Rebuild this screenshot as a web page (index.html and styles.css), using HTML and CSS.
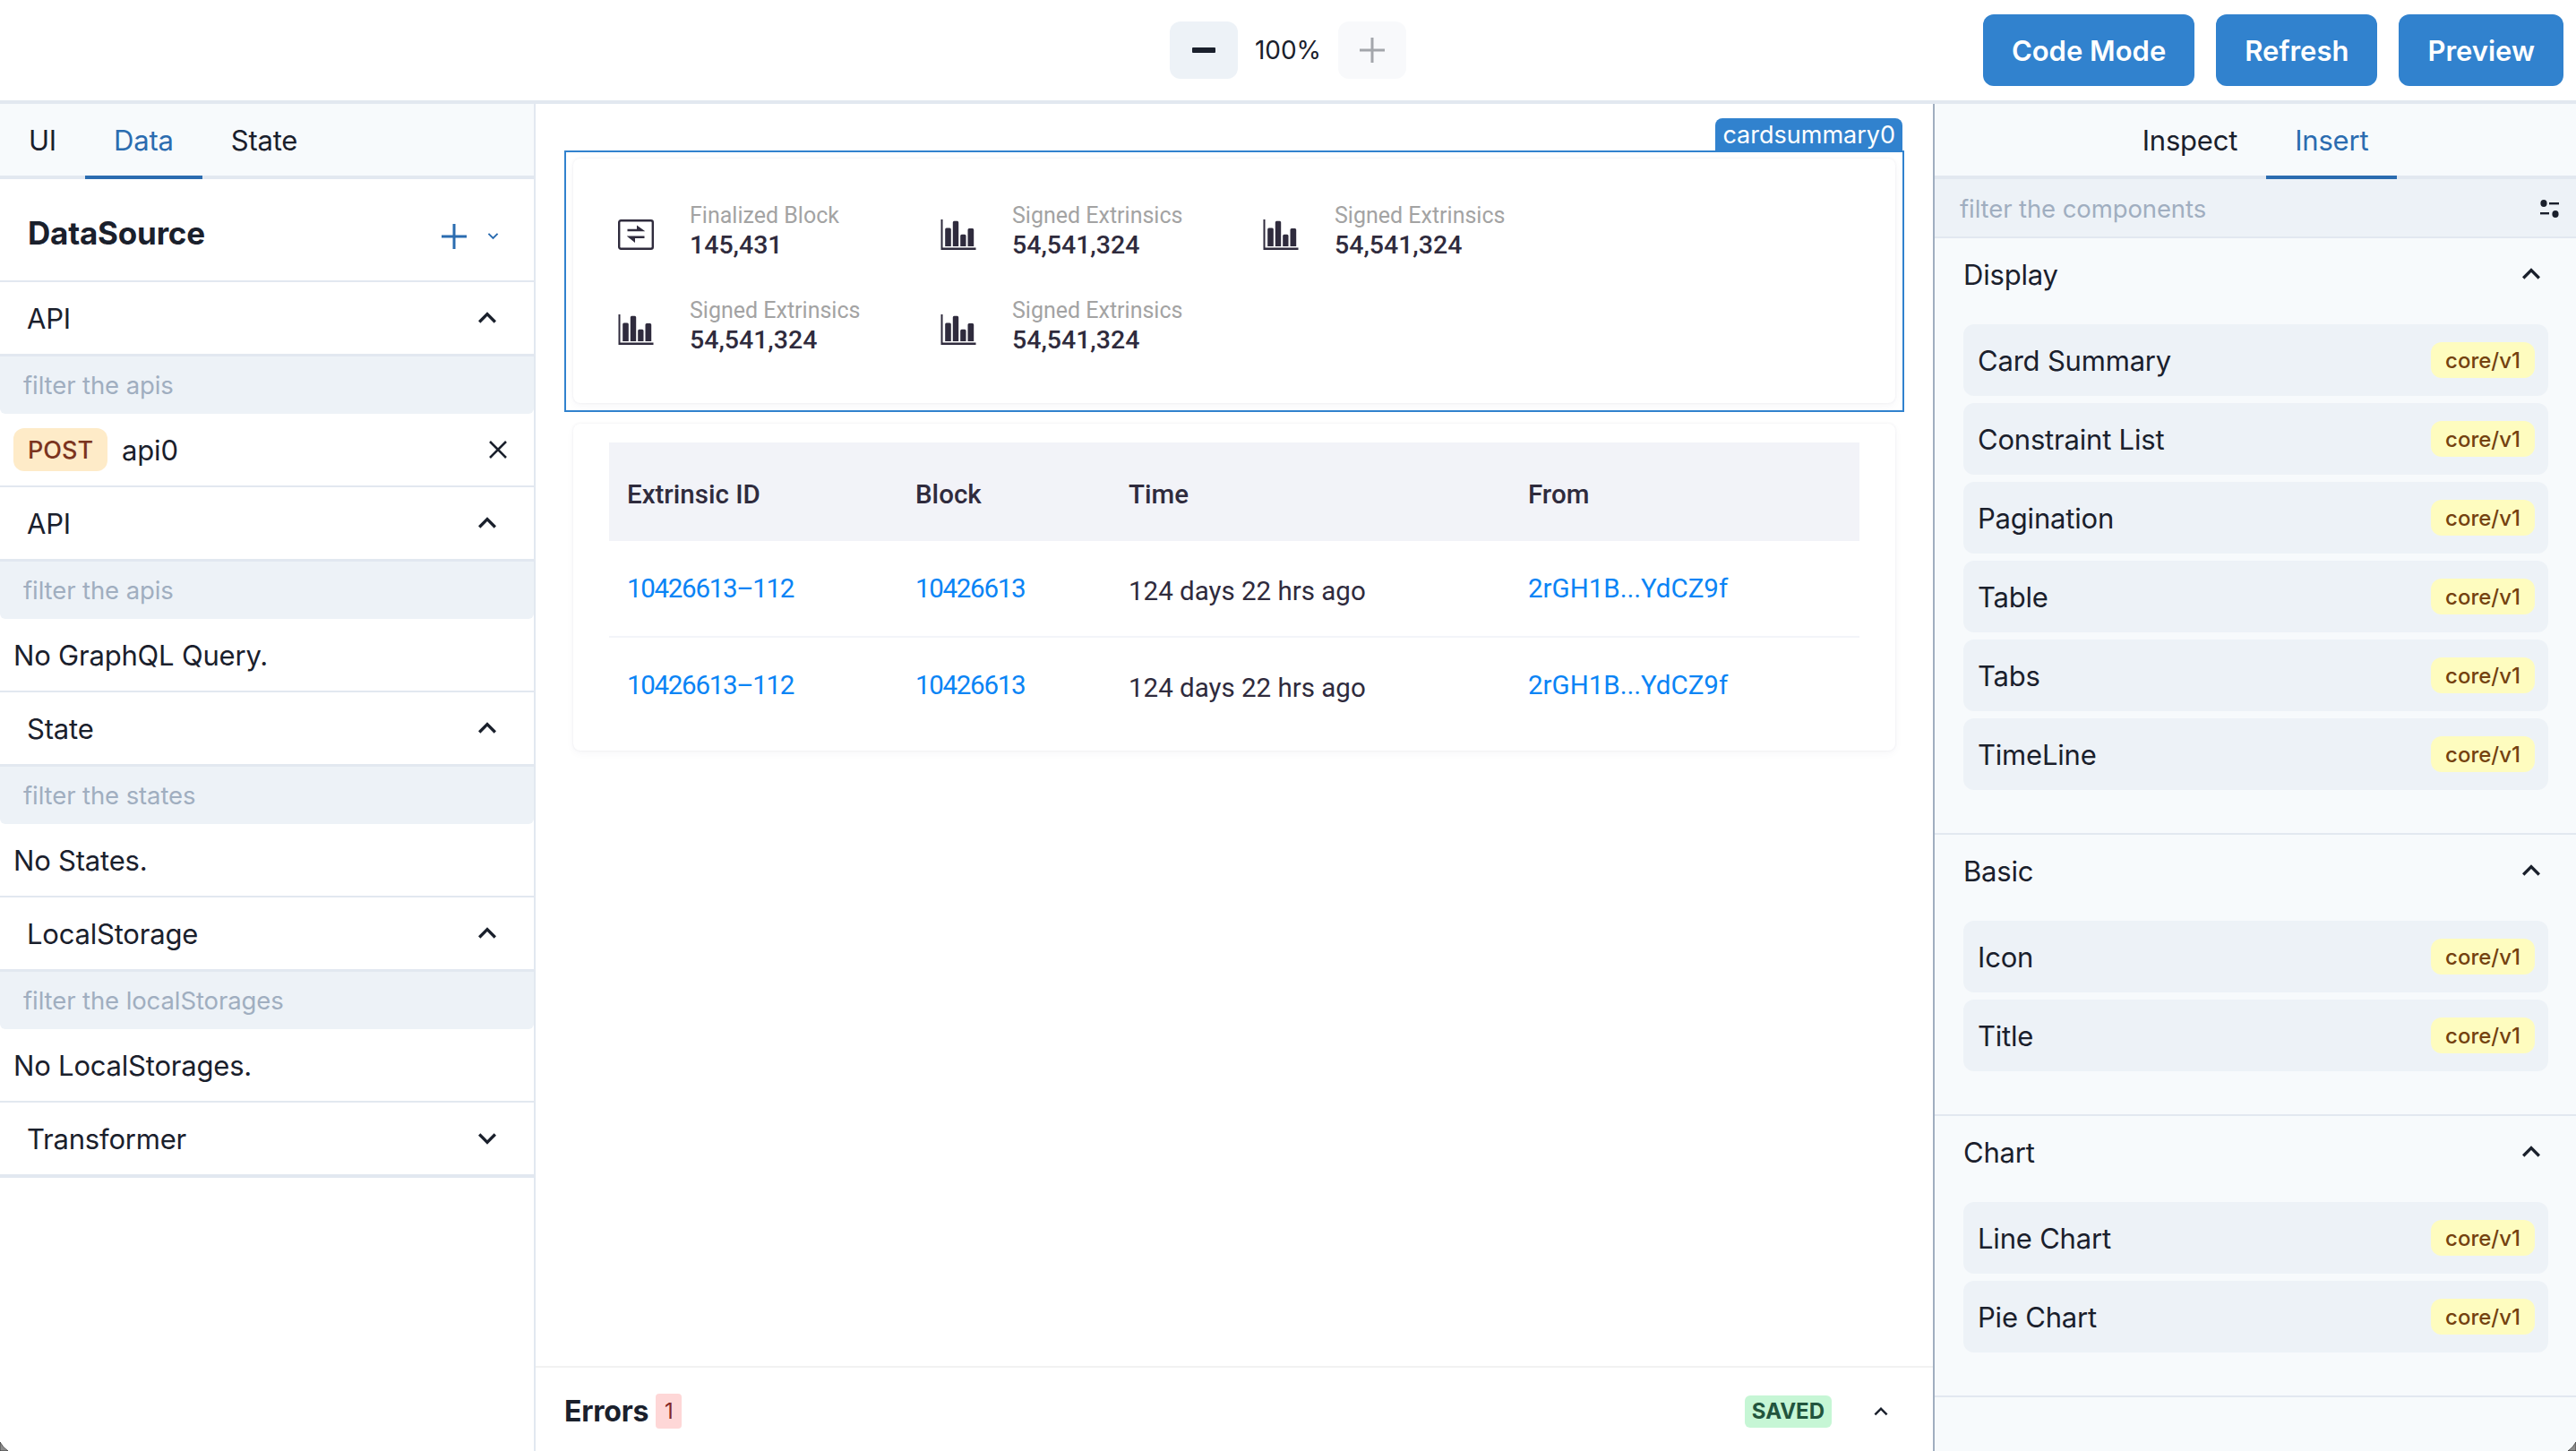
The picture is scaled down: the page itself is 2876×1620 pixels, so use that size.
FILE: index.html
```html
<!DOCTYPE html>
<html lang="en">
  <head>
    <meta charset="UTF-8" />
    <title>Editor</title>
    <link rel="stylesheet" href="styles.css">
  </head>
  <body>
    <svg class="icon-defs" xmlns="http://www.w3.org/2000/svg">
      <symbol id="chevron-up" viewBox="0 0 24 24">
        <path d="M7.41 15.41L12 10.83l4.59 4.58L18 14l-6-6-6 6z" fill="currentColor" />
      </symbol>
      <symbol id="chevron-down" viewBox="0 0 24 24">
        <path d="M7.41 8.59L12 13.17l4.59-4.58L18 10l-6 6-6-6z" fill="currentColor" />
      </symbol>
      <symbol id="chart" viewBox="0 0 39 34">
        <path d="M0 0h2v31.5h37V34H0z" fill="currentColor" />
        <path d="M4.7 30V11q0-1.5 1.5-1.5h3.6q1.5 0 1.5 1.5v19zM13.3 30V3.2q0-1.5 1.5-1.5h3.4q1.5 0 1.5 1.5V30zM21.7 30V18.2q0-1.5 1.5-1.5h3.3q1.5 0 1.5 1.5V30zM30 30V11.5q0-1.5 1.5-1.5h3.7q1.5 0 1.5 1.5V30z" fill="currentColor" />
      </symbol>
      <symbol id="swap" viewBox="0 0 40 34">
        <rect x="1.2" y="1.2" width="37.6" height="31.6" rx="2" fill="none" stroke="currentColor" stroke-width="2.4" />
        <path d="M10.5 10.8H21V6.5l9 6.5v.2H10.5zM29.5 18.5v2.6H19V26l-9-7.3v-.2z" fill="currentColor" />
      </symbol>
    </svg>

    <div class="app">
      <header class="topbar">
        <div></div>
        <div class="zoom-group">
          <button class="zoom-btn">
            <svg width="26" height="6" viewBox="0 0 26 6"><rect width="26" height="6" rx="1" fill="currentColor" /></svg>
          </button>
          <span class="zoom-value">100%</span>
          <button class="zoom-btn zoom-btn-off">
            <svg width="28" height="28" viewBox="0 0 28 28"><path d="M14 0v28M0 14h28" stroke="currentColor" stroke-width="3" /></svg>
          </button>
        </div>
        <div class="top-actions">
          <button class="primary-btn">Code Mode</button>
          <button class="primary-btn">Refresh</button>
          <button class="primary-btn">Preview</button>
        </div>
      </header>

      <div class="workspace">
        <aside class="left-panel">
          <nav class="tabs">
            <a class="tab">UI</a>
            <a class="tab tab-active">Data</a>
            <a class="tab">State</a>
          </nav>

          <div class="ds-head">
            <h2>DataSource</h2>
            <svg class="ds-plus" width="28" height="28" viewBox="0 0 28 28"><path d="M14 0v28M0 14h28" stroke="currentColor" stroke-width="3" /></svg>
            <svg class="ds-caret" width="23" height="23"><use href="#chevron-down" /></svg>
          </div>

          <section class="ds-section">
            <div class="ds-title">API <svg class="chev"><use href="#chevron-up" /></svg></div>
            <div class="ds-filter">filter the apis</div>
            <div class="ds-body">
              <span class="method">POST</span>
              <span class="api-name">api0</span>
              <svg class="close" width="20" height="20" viewBox="0 0 20 20"><path d="M1 1l18 18M19 1L1 19" stroke="currentColor" stroke-width="2.6" /></svg>
            </div>
          </section>

          <section class="ds-section">
            <div class="ds-title">API <svg class="chev"><use href="#chevron-up" /></svg></div>
            <div class="ds-filter">filter the apis</div>
            <div class="ds-body">No GraphQL Query.</div>
          </section>

          <section class="ds-section">
            <div class="ds-title">State <svg class="chev"><use href="#chevron-up" /></svg></div>
            <div class="ds-filter">filter the states</div>
            <div class="ds-body">No States.</div>
          </section>

          <section class="ds-section">
            <div class="ds-title">LocalStorage <svg class="chev"><use href="#chevron-up" /></svg></div>
            <div class="ds-filter">filter the localStorages</div>
            <div class="ds-body">No LocalStorages.</div>
          </section>

          <div class="ds-title ds-title-closed">Transformer <svg class="chev"><use href="#chevron-down" /></svg></div>
        </aside>

        <main class="center">
          <div class="canvas">
            <div class="selected">
              <span class="selected-label">cardsummary0</span>
              <div class="card summary">
                <div class="stat">
                  <svg class="stat-icon"><use href="#swap" /></svg>
                  <div>
                    <div class="stat-label">Finalized Block</div>
                    <div class="stat-value">145,431</div>
                  </div>
                </div>
                <div class="stat">
                  <svg class="stat-icon"><use href="#chart" /></svg>
                  <div>
                    <div class="stat-label">Signed Extrinsics</div>
                    <div class="stat-value">54,541,324</div>
                  </div>
                </div>
                <div class="stat">
                  <svg class="stat-icon"><use href="#chart" /></svg>
                  <div>
                    <div class="stat-label">Signed Extrinsics</div>
                    <div class="stat-value">54,541,324</div>
                  </div>
                </div>
                <div class="stat">
                  <svg class="stat-icon"><use href="#chart" /></svg>
                  <div>
                    <div class="stat-label">Signed Extrinsics</div>
                    <div class="stat-value">54,541,324</div>
                  </div>
                </div>
                <div class="stat">
                  <svg class="stat-icon"><use href="#chart" /></svg>
                  <div>
                    <div class="stat-label">Signed Extrinsics</div>
                    <div class="stat-value">54,541,324</div>
                  </div>
                </div>
              </div>
            </div>

            <div class="card table-card">
              <div class="t-row t-head">
                <div>Extrinsic ID</div>
                <div>Block</div>
                <div>Time</div>
                <div>From</div>
              </div>
              <div class="t-row">
                <a class="t-num">10426613&#8211;112</a>
                <a class="t-num">10426613</a>
                <div class="t-time">124 days 22 hrs ago</div>
                <a>2rGH1B...YdCZ9f</a>
              </div>
              <div class="t-row">
                <a class="t-num">10426613&#8211;112</a>
                <a class="t-num">10426613</a>
                <div class="t-time">124 days 22 hrs ago</div>
                <a>2rGH1B...YdCZ9f</a>
              </div>
            </div>
          </div>

          <footer class="errors-bar">
            <strong>Errors</strong>
            <span class="error-count">1</span>
            <span class="saved">SAVED</span>
            <svg class="errors-chev" width="30" height="30"><use href="#chevron-up" /></svg>
          </footer>
        </main>

        <aside class="right-panel">
          <nav class="tabs tabs-center">
            <a class="tab">Inspect</a>
            <a class="tab tab-active">Insert</a>
          </nav>
          <div class="comp-filter">
            filter the components
            <svg width="21" height="20" viewBox="0 0 21 20">
              <ellipse cx="4" cy="4" rx="3.6" ry="4" fill="#1a202c" />
              <rect x="10" y="3" width="11" height="2.4" fill="#1a202c" />
              <rect y="14" width="10" height="2.4" fill="#1a202c" />
              <ellipse cx="17" cy="16" rx="3.6" ry="4" fill="#1a202c" />
            </svg>
          </div>

          <section class="comp-section">
            <div class="comp-title">Display <svg class="chev"><use href="#chevron-up" /></svg></div>
            <div class="comp-item">Card Summary <span class="version">core/v1</span></div>
            <div class="comp-item">Constraint List <span class="version">core/v1</span></div>
            <div class="comp-item">Pagination <span class="version">core/v1</span></div>
            <div class="comp-item">Table <span class="version">core/v1</span></div>
            <div class="comp-item">Tabs <span class="version">core/v1</span></div>
            <div class="comp-item">TimeLine <span class="version">core/v1</span></div>
          </section>

          <section class="comp-section">
            <div class="comp-title">Basic <svg class="chev"><use href="#chevron-up" /></svg></div>
            <div class="comp-item">Icon <span class="version">core/v1</span></div>
            <div class="comp-item">Title <span class="version">core/v1</span></div>
          </section>

          <section class="comp-section">
            <div class="comp-title">Chart <svg class="chev"><use href="#chevron-up" /></svg></div>
            <div class="comp-item">Line Chart <span class="version">core/v1</span></div>
            <div class="comp-item">Pie Chart <span class="version">core/v1</span></div>
          </section>
        </aside>
      </div>

      <!-- window corners showing at the bottom of the capture -->
      <svg class="corner corner-left" width="10" height="10" viewBox="0 0 10 10"><path d="M0 0Q3 6 9 10H0z" fill="#8c8c8c" stroke="#333" stroke-width=".8" /></svg>
      <svg class="corner corner-right" width="10" height="10" viewBox="0 0 10 10"><path d="M10 0Q7 6 1 10H10z" fill="#8c8c8c" stroke="#333" stroke-width=".8" /></svg>
    </div>
  </body>
</html>
```

FILE: styles.css
```css
/* Global Styles */
* {
  box-sizing: border-box;
}

body {
  margin: 0;
  font-family: "Inter", sans-serif;
  font-size: 31px;
  letter-spacing: -0.2px;
  color: #1a202c;
  background: #fff;
}

.icon-defs {
  display: none;
}

.app {
  position: relative;
  display: flex;
  flex-direction: column;
  height: 100vh;
  overflow: hidden;
}

/* Top bar */
.topbar {
  display: grid;
  grid-template-columns: 1fr auto 1fr;
  align-items: center;
  height: 116px;
  flex-shrink: 0;
  border-bottom: 4px solid #e2e8f0;
}

.zoom-group {
  display: flex;
  align-items: center;
}

.zoom-btn {
  display: flex;
  align-items: center;
  justify-content: center;
  width: 76px;
  height: 64px;
  border: none;
  border-radius: 12px;
  background: #edf2f7;
  color: #1a202c;
}

.zoom-btn-off {
  background: #f8f9fb;
  color: #a3a6ab;
}

.zoom-value {
  width: 112px;
  text-align: center;
  font-size: 28px;
  letter-spacing: 0;
}

.top-actions {
  display: flex;
  justify-content: flex-end;
  gap: 24px;
  padding-right: 14px;
}

.primary-btn {
  height: 80px;
  padding: 0 32px;
  border: none;
  border-radius: 12px;
  background: #3182ce;
  color: #fff;
  font-family: inherit;
  font-size: 31px;
  font-weight: 600;
}

/* Panels */
.workspace {
  display: flex;
  flex: 1;
  min-height: 0;
}

.left-panel {
  width: 598px;
  flex-shrink: 0;
  border-right: 2px solid #e2e8f0;
}

.right-panel {
  width: 718px;
  flex-shrink: 0;
  border-left: 2px solid #a0aec0;
  background: #f7fafc;
}

.center {
  display: flex;
  flex-direction: column;
  flex: 1;
  min-width: 0;
}

/* Tabs */
.tabs {
  display: flex;
  height: 84px;
  border-bottom: 4px solid #e2e8f0;
  background: #f7fafc;
}

.tabs-center {
  justify-content: center;
}

.tab {
  display: flex;
  align-items: center;
  height: 84px;
  padding: 0 32px;
  border-bottom: 4px solid transparent;
}

.tab-active {
  color: #2b6cb0;
  border-bottom-color: #2b6cb0;
}

/* DataSource list */
.ds-head {
  display: flex;
  align-items: center;
  height: 115px;
  padding: 14px 34px 0 31px;
  border-bottom: 2px solid #e2e8f0;
}

.ds-head h2 {
  flex: 1;
  margin: 0 0 8px;
  font-size: 35px;
  font-weight: 700;
}

.ds-plus {
  color: #2b6cb0;
}

.ds-caret {
  margin-left: 18px;
  color: #2b6cb0;
}

.ds-section {
  border-bottom: 2px solid #e2e8f0;
}

.ds-title {
  display: flex;
  align-items: center;
  justify-content: space-between;
  height: 83px;
  padding: 0 32px 0 30px;
  border-bottom: 3px solid #e2e8f0;
}

.ds-title-closed {
  height: 84px;
  border-bottom-width: 4px;
}

.chev {
  width: 40px;
  height: 40px;
  flex-shrink: 0;
}

.ds-filter {
  display: flex;
  align-items: center;
  height: 64px;
  padding-left: 26px;
  border-radius: 0 0 6px 6px;
  background: #edf2f7;
  color: #a0aec0;
  font-size: 27.5px;
  letter-spacing: -0.1px;
}

.ds-body {
  display: flex;
  align-items: center;
  height: 80px;
  padding: 0 30px 0 15px;
}

.method {
  display: flex;
  align-items: center;
  height: 48px;
  padding: 0 16px;
  border-radius: 12px;
  background: #feebc8;
  color: #7b341e;
  font-size: 27px;
  font-weight: 500;
  letter-spacing: 0;
}

.api-name {
  flex: 1;
  margin-left: 16px;
}

/* Canvas */
.canvas {
  flex: 1;
  padding: 52px 32px 0;
}

.selected {
  position: relative;
  margin-bottom: 13px;
  padding: 7px 8px 8px;
  border: 2px solid #3182ce;
}

.selected-label {
  position: absolute;
  right: 0;
  bottom: 100%;
  height: 38px;
  padding: 0 8px;
  border-radius: 8px 8px 0 0;
  background: #3182ce;
  color: #fff;
  font-size: 27px;
  line-height: 38px;
  letter-spacing: 0;
}

.card {
  border-radius: 8px;
  background: #fff;
  letter-spacing: 0;
  box-shadow: 0 0 3px rgba(40, 40, 90, 0.08), 0 3px 10px rgba(40, 40, 90, 0.04);
}

.summary {
  display: grid;
  grid-template-columns: repeat(3, 360px);
  row-gap: 40px;
  padding: 48px 50px 53px;
  font-family: "Roboto", sans-serif;
}

.stat {
  display: flex;
  align-items: flex-start;
  gap: 40px;
}

.stat-icon {
  width: 40px;
  height: 34px;
  margin-top: 20px;
  flex-shrink: 0;
  color: #2f2b3d;
}

.stat-label {
  color: #a3a3a3;
  font-size: 25px;
  line-height: 32px;
}

.stat-value {
  color: #2f2b3d;
  font-size: 28.5px;
  font-weight: 500;
  line-height: 34px;
}

.table-card {
  margin: 0 10px;
  padding: 21px 40px 20px;
  font-family: "Roboto", sans-serif;
  font-size: 29.5px;
}

.t-row {
  display: grid;
  grid-template-columns: 322px 238px 446px 390px;
  align-items: center;
  height: 108px;
  border-bottom: 2px solid #f3f4f9;
  color: #2f2b3d;
}

.t-row > * {
  padding-left: 20px;
}

.t-row:last-child {
  height: 106px;
  border-bottom: none;
}

.t-row a {
  color: #0a84f5;
}

.t-row .t-num {
  letter-spacing: -1.3px;
}

.t-head {
  height: 110px;
  padding-top: 5px;
  border-bottom: none;
  background: #f2f3f8;
  font-weight: 500;
}

.t-time {
  padding-top: 6px;
}

/* Errors bar */
.errors-bar {
  display: flex;
  align-items: center;
  height: 95px;
  flex-shrink: 0;
  padding: 4px 43px 0 32px;
  border-top: 2px solid #f2f2f2;
}

.errors-bar strong {
  font-size: 32px;
  font-weight: 700;
}

.error-count {
  width: 29px;
  margin: 0 auto 0 8px;
  border-radius: 4px;
  background: #fed7d7;
  color: #822727;
  font-size: 24px;
  line-height: 39px;
  text-align: center;
}

.saved {
  height: 36px;
  padding: 0 8px;
  border-radius: 6px;
  background: #c6f6d5;
  color: #22543d;
  font-size: 24px;
  font-weight: 700;
  line-height: 36px;
  letter-spacing: 0;
}

.errors-chev {
  margin-left: 40px;
}

/* Component list */
.comp-filter {
  display: flex;
  align-items: center;
  justify-content: space-between;
  height: 66px;
  padding: 2px 19px 0 28px;
  border-bottom: 2px solid #e2e8f0;
  background: #edf2f7;
  color: #a0aec0;
  font-size: 27.5px;
  letter-spacing: -0.1px;
}

.comp-section {
  display: flex;
  flex-direction: column;
  gap: 8px;
  padding: 0 31px 48px 32px;
  border-bottom: 2px solid #e2e8f0;
}

.comp-title {
  display: flex;
  align-items: center;
  justify-content: space-between;
  height: 88px;
  padding-bottom: 8px;
}

.comp-title .chev {
  margin-right: -1px;
}

.comp-item {
  display: flex;
  align-items: center;
  justify-content: space-between;
  height: 80px;
  padding: 0 15px 0 16px;
  border-radius: 12px;
  background: #edf2f7;
}

.version {
  height: 40px;
  padding: 0 16px;
  border-radius: 12px;
  background: #fefcbf;
  color: #744210;
  font-size: 24px;
  font-weight: 500;
  line-height: 42px;
  letter-spacing: 0;
}

/* Window corners */
.corner {
  position: absolute;
  bottom: 0;
}

.corner-left {
  left: 0;
}

.corner-right {
  right: 0;
}
```
